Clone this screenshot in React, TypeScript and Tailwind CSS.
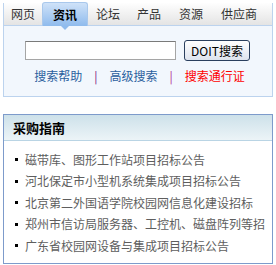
import React from 'react';

const tabs = [
  { t: '网页', w: 'w-[38px]' },
  { t: '资讯', w: 'w-[46px]', active: true },
  { t: '论坛', w: 'w-[40px]' },
  { t: '产品', w: 'w-[42px]' },
  { t: '资源', w: 'w-[42px]' },
  { t: '供应商', w: 'w-[54px]' },
];

const guides = [
  '磁带库、图形工作站项目招标公告',
  '河北保定市小型机系统集成项目招标公告',
  '北京第二外国语学院校园网信息化建设招标',
  '郑州市信访局服务器、工控机、磁盘阵列等招',
  '广东省校园网设备与集成项目招标公告',
];

const font = { fontFamily: '"Noto Sans CJK SC", "Liberation Sans", sans-serif' };

export default function App() {
  return (
    <div className="w-[276px] h-[265px] bg-white p-[3px] text-[12px] leading-none" style={font}>
      {/* Search box */}
      <div className="w-[270px] border border-[#bcd3ee] border-t-0">
        <div className="h-[23px] flex items-end bg-gradient-to-b from-[#fefefe] to-[#e4e4e4] border-b border-[#bcd3ee]">
          {tabs.map(({ t, w, active }) =>
            active ? (
              <div
                key={t}
                className={`relative h-[24px] ${w} -mb-px flex items-center justify-center rounded-t-[3px] border border-[#a9c8ec] border-b-0 bg-gradient-to-b from-[#cfe2f8] to-[#8fbbed] font-bold text-black`}
              >
                {t}
                <span className="absolute -bottom-[4px] left-1/2 -translate-x-1/2 w-0 h-0 border-l-[4px] border-r-[4px] border-t-[4px] border-l-transparent border-r-transparent border-t-[#8fbbed]" />
              </div>
            ) : (
              <div key={t} className={`h-[22px] ${w} flex items-center justify-center text-[#333]`}>
                {t}
              </div>
            )
          )}
        </div>
        <div className="h-[70px] bg-[#f2f7fd] pt-[14px]">
          <div className="flex items-center pl-[21px] gap-[8px]">
            <input className="w-[151px] h-[19px] bg-white border border-[#a5a5a5] border-t-[#7a7a7a] outline-none" />
            <button className="w-[66px] h-[21px] rounded-[3px] border border-[#2a3f5e] bg-gradient-to-b from-white to-[#dde3ee] text-[12px] text-black" style={font}>
              DOIT搜索
            </button>
          </div>
          <div className="mt-[9px] pl-[3px] flex justify-center items-center gap-[12px] text-[#2a5f9e]">
            <span>搜索帮助</span>
            <span className="text-[#7a2080]">|</span>
            <span>高级搜索</span>
            <span className="text-[#b0208f]">|</span>
            <span className="text-[#ff0000]">搜索通行证</span>
          </div>
        </div>
      </div>

      {/* Guide panel */}
      <div className="mt-[17px] w-[270px] h-[150px] border border-[#7d9bcb]">
        <div className="h-[26px] flex items-center pl-[9px] bg-gradient-to-b from-[#cde1ea] to-[#ecf4f7] border-b border-[#b9d4e4] text-[13px] font-bold text-black">
          采购指南
        </div>
        <ul className="pt-[8px] pr-[4px]">
          {guides.map((g) => (
            <li key={g} className="h-[21.5px] flex items-center pl-[11px] gap-[7px] text-[#5e5e5e] whitespace-nowrap overflow-hidden">
              <span className="w-[3px] h-[3px] bg-black shrink-0" />
              {g}
            </li>
          ))}
        </ul>
      </div>
    </div>
  );
}
